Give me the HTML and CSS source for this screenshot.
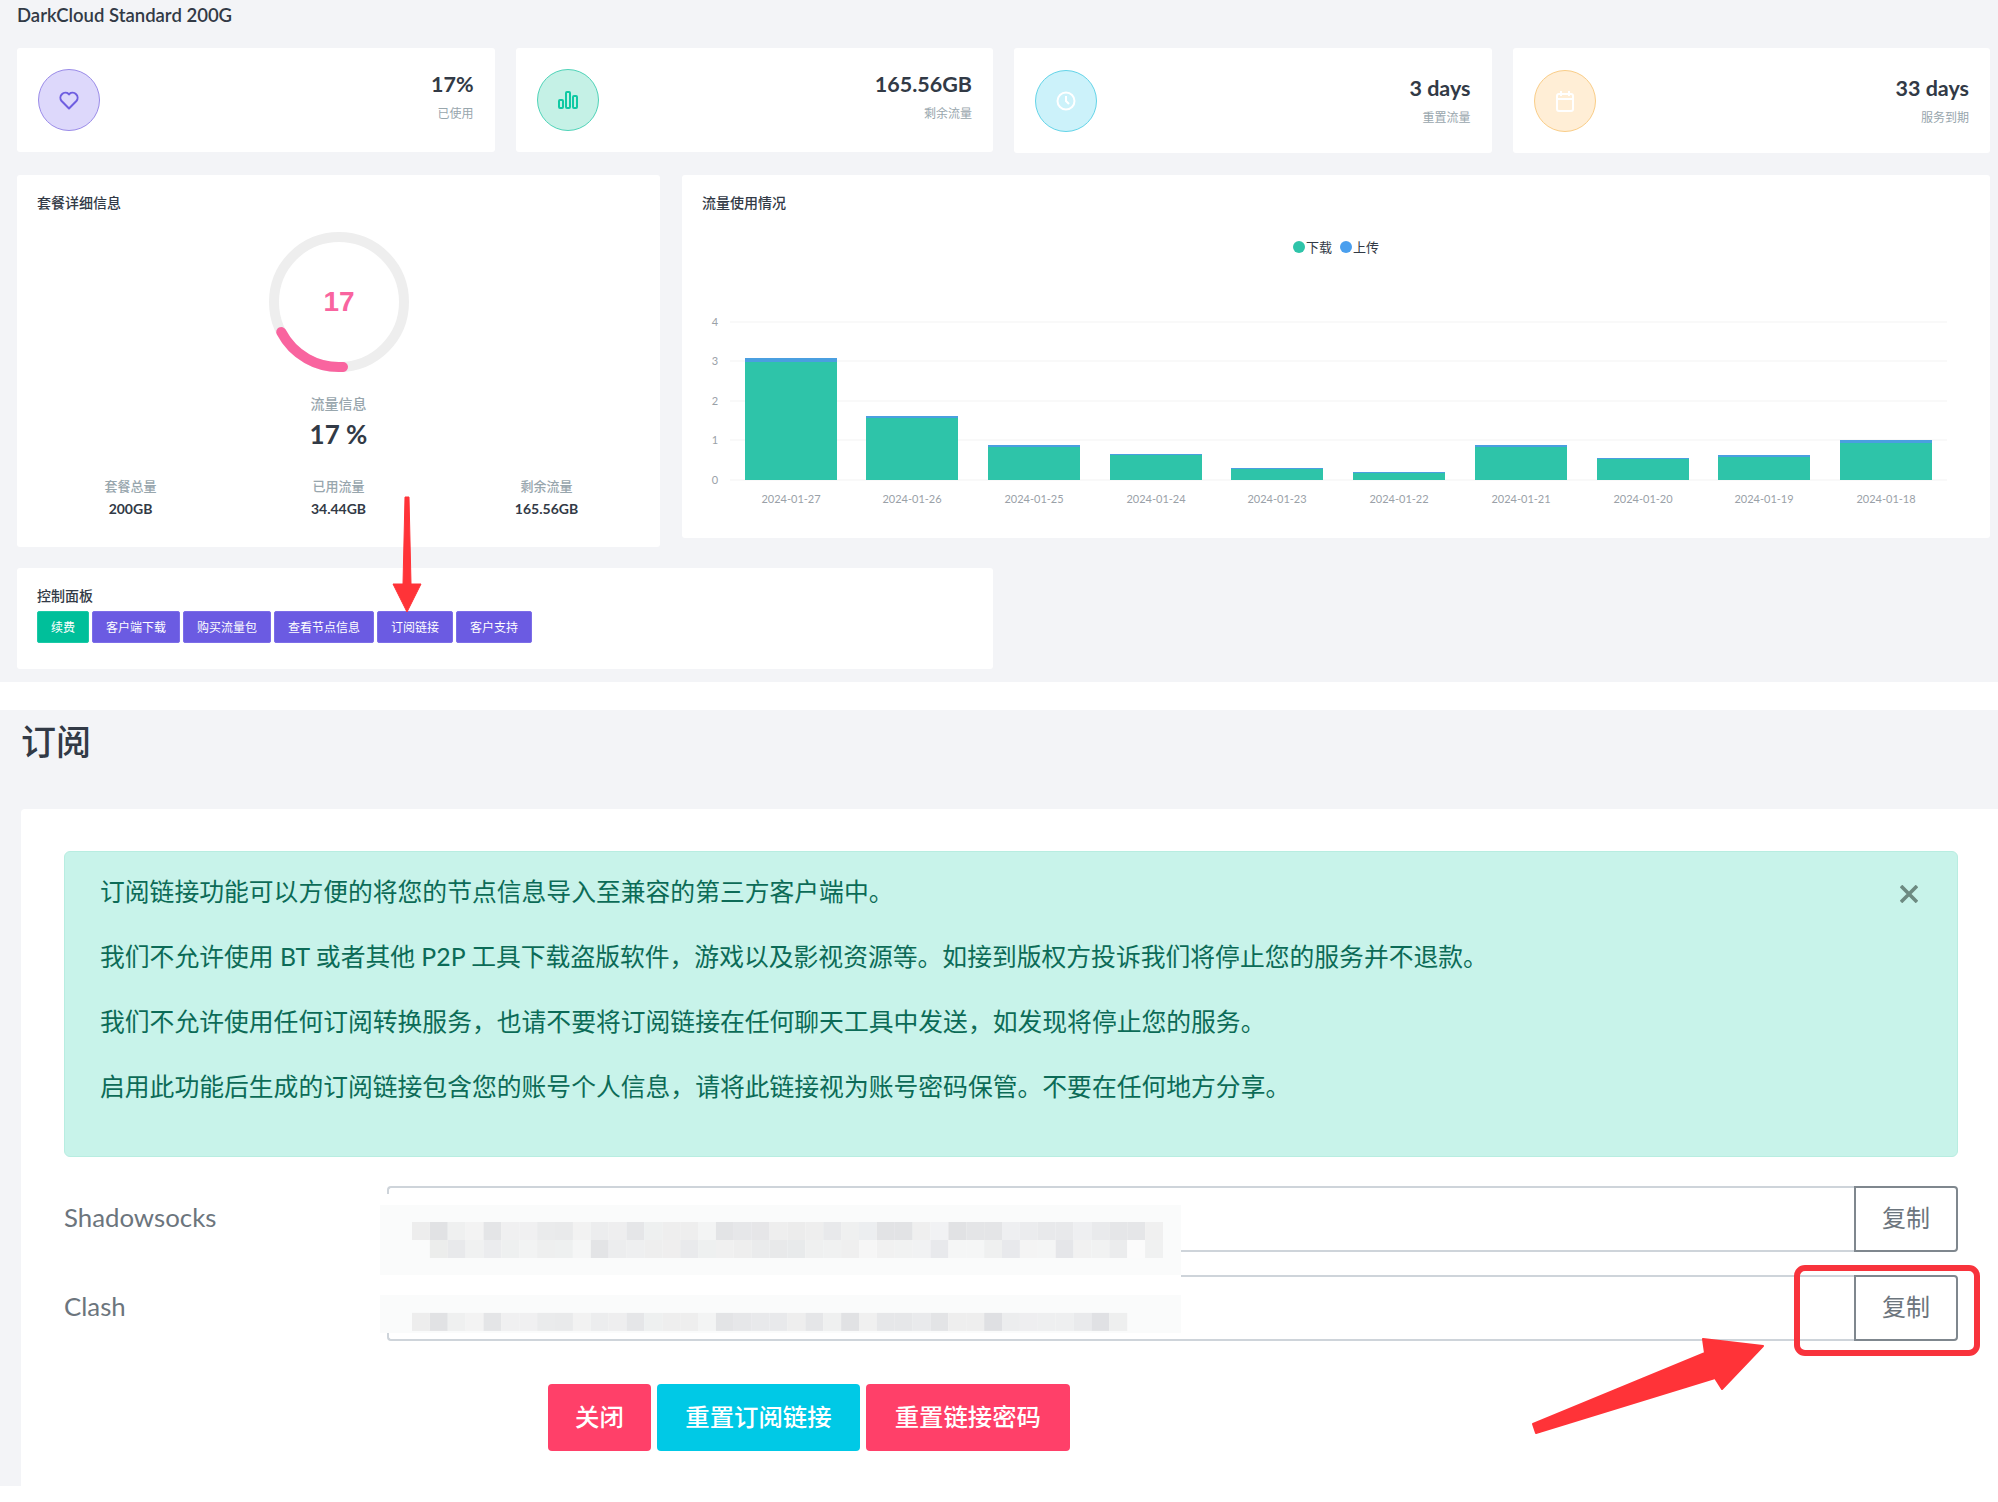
FILE: index.html
```html
<!DOCTYPE html>
<html lang="zh">
<head>
<meta charset="utf-8">
<title>DarkCloud Standard 200G</title>
<link rel="stylesheet" href="styles.css">
</head>
<body>

<section class="dash">
    <h5 class="plan-name">DarkCloud Standard 200G</h5>

    <div class="stat-row">
        <div class="stat-card">
            <span class="stat-icon purple">
                <svg width="24" height="24" viewBox="0 0 24 24" fill="none" stroke="#6f5ee0" stroke-width="2" stroke-linejoin="round"><path d="M12 20.5 4.6 13A5 5 0 0 1 11.7 6l.3.4.3-.4a5 5 0 0 1 7.1 7z"/></svg>
            </span>
            <div class="stat-text">
                <div class="stat-value">17%</div>
                <div class="stat-label">已使用</div>
            </div>
        </div>
        <div class="stat-card">
            <span class="stat-icon green">
                <svg width="24" height="24" viewBox="0 0 24 24" fill="none" stroke="#10c9a3" stroke-width="2"><rect x="3" y="12" width="4" height="8" rx="1"/><rect x="10" y="4" width="4" height="16" rx="1"/><rect x="17" y="8" width="4" height="12" rx="1"/></svg>
            </span>
            <div class="stat-text">
                <div class="stat-value">165.56GB</div>
                <div class="stat-label">剩余流量</div>
            </div>
        </div>
        <div class="stat-card tall">
            <span class="stat-icon blue">
                <svg width="24" height="24" viewBox="0 0 24 24" fill="none" stroke="#fff" stroke-width="2"><circle cx="12" cy="12" r="8.5"/><path d="M12 7v5l3 3"/></svg>
            </span>
            <div class="stat-text">
                <div class="stat-value">3 days</div>
                <div class="stat-label">重置流量</div>
            </div>
        </div>
        <div class="stat-card tall">
            <span class="stat-icon orange">
                <svg width="24" height="24" viewBox="0 0 24 24" fill="none" stroke="#fff" stroke-width="2"><rect x="4" y="5" width="16" height="17" rx="2"/><path d="M4 10h16M8 2v5M16 2v5"/></svg>
            </span>
            <div class="stat-text">
                <div class="stat-value">33 days</div>
                <div class="stat-label">服务到期</div>
            </div>
        </div>
    </div>

    <div class="info-row">
        <div class="card plan-card">
            <h6 class="card-title">套餐详细信息</h6>
            <svg class="ring" width="150" height="150" viewBox="0 0 150 150" fill="none">
                <circle cx="75" cy="75" r="65" stroke="#eeeeee" stroke-width="10"/>
                <path d="M79 139.9A65 65 0 0 1 17.2 104.9" stroke="#f9649f" stroke-width="10" stroke-linecap="round"/>
                <text class="ring-number" x="75" y="84" text-anchor="middle">17</text>
            </svg>
            <div class="usage-label">流量信息</div>
            <div class="usage-value">17 %</div>
            <div class="usage-grid">
                <div><div class="usage-key">套餐总量</div><div class="usage-num">200GB</div></div>
                <div><div class="usage-key">已用流量</div><div class="usage-num">34.44GB</div></div>
                <div><div class="usage-key">剩余流量</div><div class="usage-num">165.56GB</div></div>
            </div>
        </div>

        <div class="card chart-card">
            <h6 class="card-title">流量使用情况</h6>
            <svg class="chart" width="1308" height="313" viewBox="0 0 1308 313">
                <circle cx="617" cy="22" r="6" fill="#2ec4a9"/>
                <text class="legend" x="624" y="27">下载</text>
                <circle cx="664" cy="22" r="6" fill="#4a9fee"/>
                <text class="legend" x="671" y="27">上传</text>

                <g stroke="#f7f8f8" stroke-width="1.5">
                    <path d="M48 97H1265M48 136H1265M48 176H1265M48 215H1265M48 255H1265"/>
                </g>
                <g class="axis" text-anchor="middle">
                    <text x="33" y="101">4</text>
                    <text x="33" y="140">3</text>
                    <text x="33" y="180">2</text>
                    <text x="33" y="219">1</text>
                    <text x="33" y="259">0</text>
                    <text x="109" y="278">2024-01-27</text>
                    <text x="230" y="278">2024-01-26</text>
                    <text x="352" y="278">2024-01-25</text>
                    <text x="474" y="278">2024-01-24</text>
                    <text x="595" y="278">2024-01-23</text>
                    <text x="717" y="278">2024-01-22</text>
                    <text x="839" y="278">2024-01-21</text>
                    <text x="961" y="278">2024-01-20</text>
                    <text x="1082" y="278">2024-01-19</text>
                    <text x="1204" y="278">2024-01-18</text>
                </g>
                <g fill="#2ec4a9">
                    <rect x="63" y="137" width="92" height="118"/>
                    <rect x="184" y="193" width="92" height="62"/>
                    <rect x="306" y="222" width="92" height="33"/>
                    <rect x="428" y="230" width="92" height="25"/>
                    <rect x="549" y="244" width="92" height="11"/>
                    <rect x="671" y="248" width="92" height="7"/>
                    <rect x="793" y="222" width="92" height="33"/>
                    <rect x="915" y="234" width="92" height="21"/>
                    <rect x="1036" y="232" width="92" height="23"/>
                    <rect x="1158" y="218" width="92" height="37"/>
                </g>
                <g fill="#4a9fe0">
                    <rect x="63" y="133" width="92" height="4"/>
                    <rect x="184" y="191" width="92" height="2"/>
                    <rect x="306" y="220" width="92" height="2"/>
                    <rect x="428" y="229" width="92" height="1"/>
                    <rect x="549" y="243" width="92" height="1"/>
                    <rect x="671" y="247" width="92" height="1"/>
                    <rect x="793" y="220" width="92" height="2"/>
                    <rect x="915" y="233" width="92" height="1"/>
                    <rect x="1036" y="230" width="92" height="2"/>
                    <rect x="1158" y="215" width="92" height="3"/>
                </g>
            </svg>
        </div>
    </div>

    <div class="card control-card">
        <h6 class="control-title">控制面板</h6>
        <div class="control-btns">
            <button class="btn-small renew">续费</button>
            <button class="btn-small">客户端下载</button>
            <button class="btn-small">购买流量包</button>
            <button class="btn-small">查看节点信息</button>
            <button class="btn-small">订阅链接</button>
            <button class="btn-small">客户支持</button>
        </div>
    </div>
</section>

<section class="subscribe">
    <h2 class="subscribe-title">订阅</h2>
    <div class="subscribe-card">
        <div class="alert">
            <svg class="alert-close" width="18" height="18" viewBox="0 0 18 18" stroke="#6d8a81" stroke-width="3.6"><path d="M1 1 17 17M17 1 1 17"/></svg>
            <p>订阅链接功能可以方便的将您的节点信息导入至兼容的第三方客户端中。</p>
            <p>我们不允许使用 BT 或者其他 P2P 工具下载盗版软件，游戏以及影视资源等。如接到版权方投诉我们将停止您的服务并不退款。</p>
            <p>我们不允许使用任何订阅转换服务，也请不要将订阅链接在任何聊天工具中发送，如发现将停止您的服务。</p>
            <p>启用此功能后生成的订阅链接包含您的账号个人信息，请将此链接视为账号密码保管。不要在任何地方分享。</p>
        </div>

        <div class="key-form">
            <div class="key-row">
                <label class="key-label">Shadowsocks</label>
                <input class="key-input" type="text">
                <button class="copy-btn">复制</button>
            </div>
            <div class="key-row">
                <label class="key-label">Clash</label>
                <input class="key-input" type="text">
                <button class="copy-btn">复制</button>
            </div>

            <!-- blurred out links -->
            <svg class="mosaic" width="801" height="139" viewBox="0 0 801 139">
                <rect width="801" height="139" fill="#fff"/>
                <rect y="11" width="801" height="70" fill="#fafbfb"/>
                <rect y="101" width="801" height="38" fill="#fafbfb"/>
                <g transform="translate(32 28) scale(17.88 18)">
                    <rect x="0" width="1" height="1" fill="#ededed"/><rect x="1" width="1" height="1" fill="#e1e2e4"/><rect x="2" width="1" height="1" fill="#eff0f0"/><rect x="3" width="1" height="1" fill="#f3f3f3"/><rect x="4" width="1" height="1" fill="#e4e5e7"/><rect x="5" width="1" height="1" fill="#f0f0f1"/><rect x="6" width="1" height="1" fill="#f0f0f1"/>
                    <rect x="7" width="1" height="1" fill="#eaebec"/><rect x="8" width="1" height="1" fill="#e9eaeb"/><rect x="9" width="1" height="1" fill="#f2f2f2"/><rect x="10" width="1" height="1" fill="#ecedee"/><rect x="11" width="1" height="1" fill="#eeeeef"/><rect x="12" width="1" height="1" fill="#e5e6e8"/><rect x="13" width="1" height="1" fill="#eef0f0"/>
                    <rect x="14" width="1" height="1" fill="#eeeeee"/><rect x="15" width="1" height="1" fill="#eeeeee"/><rect x="16" width="1" height="1" fill="#f3f4f4"/><rect x="17" width="1" height="1" fill="#e3e4e6"/><rect x="18" width="1" height="1" fill="#e6e7e9"/><rect x="19" width="1" height="1" fill="#e6e6e8"/><rect x="20" width="1" height="1" fill="#eeeeee"/>
                    <rect x="21" width="1" height="1" fill="#ececec"/><rect x="22" width="1" height="1" fill="#eeeeee"/><rect x="23" width="1" height="1" fill="#e8e9eb"/><rect x="24" width="1" height="1" fill="#eff0f0"/><rect x="25" width="1" height="1" fill="#eceef0"/><rect x="26" width="1" height="1" fill="#e2e3e5"/><rect x="27" width="1" height="1" fill="#e2e3e5"/>
                    <rect x="28" width="1" height="1" fill="#efefef"/><rect x="29" width="1" height="1" fill="#f1f2f4"/><rect x="30" width="1" height="1" fill="#e1e2e4"/><rect x="31" width="1" height="1" fill="#e4e5e7"/><rect x="32" width="1" height="1" fill="#e4e5e7"/><rect x="33" width="1" height="1" fill="#eeeff1"/><rect x="34" width="1" height="1" fill="#ebecee"/>
                    <rect x="35" width="1" height="1" fill="#e8e9eb"/><rect x="36" width="1" height="1" fill="#e8e9eb"/><rect x="37" width="1" height="1" fill="#eeeff1"/><rect x="38" width="1" height="1" fill="#e9eaec"/><rect x="39" width="1" height="1" fill="#e5e6e8"/><rect x="40" width="1" height="1" fill="#e5e6e8"/><rect x="41" width="1" height="1" fill="#f0f0f0"/>

                    <rect x="1" y="1" width="1" height="1" fill="#ecedec"/><rect x="2" y="1" width="1" height="1" fill="#e8e9eb"/><rect x="3" y="1" width="1" height="1" fill="#f0f1f1"/><rect x="4" y="1" width="1" height="1" fill="#ebecee"/><rect x="5" y="1" width="1" height="1" fill="#eef0f0"/><rect x="6" y="1" width="1" height="1" fill="#f2f3f3"/><rect x="7" y="1" width="1" height="1" fill="#eeefef"/>
                    <rect x="8" y="1" width="1" height="1" fill="#eef0f0"/><rect x="9" y="1" width="1" height="1" fill="#f5f6f6"/><rect x="10" y="1" width="1" height="1" fill="#e3e4e6"/><rect x="11" y="1" width="1" height="1" fill="#ecedee"/><rect x="12" y="1" width="1" height="1" fill="#eeeff0"/><rect x="13" y="1" width="1" height="1" fill="#eeeeee"/><rect x="14" y="1" width="1" height="1" fill="#efeeee"/>
                    <rect x="15" y="1" width="1" height="1" fill="#e9eaec"/><rect x="16" y="1" width="1" height="1" fill="#eef0f0"/><rect x="17" y="1" width="1" height="1" fill="#f0f0f0"/><rect x="18" y="1" width="1" height="1" fill="#eeeeee"/><rect x="19" y="1" width="1" height="1" fill="#eaebec"/><rect x="20" y="1" width="1" height="1" fill="#e8e9ea"/><rect x="21" y="1" width="1" height="1" fill="#e8eaeb"/>
                    <rect x="22" y="1" width="1" height="1" fill="#eff0f0"/><rect x="23" y="1" width="1" height="1" fill="#f0f1f1"/><rect x="24" y="1" width="1" height="1" fill="#efefef"/><rect x="25" y="1" width="1" height="1" fill="#f6f6f6"/><rect x="26" y="1" width="1" height="1" fill="#f1f1f1"/><rect x="27" y="1" width="1" height="1" fill="#f1f2f2"/><rect x="28" y="1" width="1" height="1" fill="#f1f2f3"/>
                    <rect x="29" y="1" width="1" height="1" fill="#e8e9ec"/><rect x="30" y="1" width="1" height="1" fill="#f5f6f6"/><rect x="31" y="1" width="1" height="1" fill="#f5f6f6"/><rect x="32" y="1" width="1" height="1" fill="#eff0f0"/><rect x="33" y="1" width="1" height="1" fill="#e8e9ec"/><rect x="34" y="1" width="1" height="1" fill="#f4f4f4"/><rect x="35" y="1" width="1" height="1" fill="#f4f5f5"/>
                    <rect x="36" y="1" width="1" height="1" fill="#e5e6e9"/><rect x="37" y="1" width="1" height="1" fill="#f1f1f1"/><rect x="38" y="1" width="1" height="1" fill="#f1f2f2"/><rect x="39" y="1" width="1" height="1" fill="#ebeced"/><rect x="40" y="1" width="1" height="1" fill="#fbfbfb"/><rect x="41" y="1" width="1" height="1" fill="#f0f1f1"/>

                    <rect x="0" y="5.05" width="1" height="1" fill="#ededed"/><rect x="1" y="5.05" width="1" height="1" fill="#e1e2e4"/><rect x="2" y="5.05" width="1" height="1" fill="#eff0f0"/><rect x="3" y="5.05" width="1" height="1" fill="#f3f3f3"/><rect x="4" y="5.05" width="1" height="1" fill="#e4e5e7"/><rect x="5" y="5.05" width="1" height="1" fill="#f0f0f1"/><rect x="6" y="5.05" width="1" height="1" fill="#f0f0f1"/>
                    <rect x="7" y="5.05" width="1" height="1" fill="#eaebec"/><rect x="8" y="5.05" width="1" height="1" fill="#e9eaeb"/><rect x="9" y="5.05" width="1" height="1" fill="#f2f2f2"/><rect x="10" y="5.05" width="1" height="1" fill="#ecedee"/><rect x="11" y="5.05" width="1" height="1" fill="#eeeeef"/><rect x="12" y="5.05" width="1" height="1" fill="#e5e6e8"/><rect x="13" y="5.05" width="1" height="1" fill="#eef0f0"/>
                    <rect x="14" y="5.05" width="1" height="1" fill="#eeeeee"/><rect x="15" y="5.05" width="1" height="1" fill="#eeeeee"/><rect x="16" y="5.05" width="1" height="1" fill="#f3f4f4"/><rect x="17" y="5.05" width="1" height="1" fill="#e3e4e6"/><rect x="18" y="5.05" width="1" height="1" fill="#e6e7e9"/><rect x="19" y="5.05" width="1" height="1" fill="#e8e9eb"/><rect x="20" y="5.05" width="1" height="1" fill="#e8e9eb"/>
                    <rect x="21" y="5.05" width="1" height="1" fill="#eeeeee"/><rect x="22" y="5.05" width="1" height="1" fill="#e5e6e8"/><rect x="23" y="5.05" width="1" height="1" fill="#eff0f0"/><rect x="24" y="5.05" width="1" height="1" fill="#e1e2e4"/><rect x="25" y="5.05" width="1" height="1" fill="#f0f0f0"/><rect x="26" y="5.05" width="1" height="1" fill="#e6e7e9"/><rect x="27" y="5.05" width="1" height="1" fill="#e6e7e9"/>
                    <rect x="28" y="5.05" width="1" height="1" fill="#e9eaec"/><rect x="29" y="5.05" width="1" height="1" fill="#e3e4e6"/><rect x="30" y="5.05" width="1" height="1" fill="#eeeeee"/><rect x="31" y="5.05" width="1" height="1" fill="#eeeeee"/><rect x="32" y="5.05" width="1" height="1" fill="#dfe0e3"/><rect x="33" y="5.05" width="1" height="1" fill="#ecedee"/><rect x="34" y="5.05" width="1" height="1" fill="#eeeef0"/>
                    <rect x="35" y="5.05" width="1" height="1" fill="#eeeff0"/><rect x="36" y="5.05" width="1" height="1" fill="#eeeff0"/><rect x="37" y="5.05" width="1" height="1" fill="#e9eaec"/><rect x="38" y="5.05" width="1" height="1" fill="#e0e1e4"/><rect x="39" y="5.05" width="1" height="1" fill="#eeefef"/>
                </g>
            </svg>
        </div>

        <div class="actions">
            <button class="btn-big red close">关闭</button>
            <button class="btn-big cyan">重置订阅链接</button>
            <button class="btn-big red">重置链接密码</button>
        </div>
    </div>
</section>

<!-- red marks drawn on top of the screenshot -->
<svg class="marks" width="1998" height="1502" viewBox="0 0 1998 1502">
    <path d="M405 497H409L411 584H421L407 612L393 584H403Z" fill="#ff3338" stroke="#ff3338" stroke-linejoin="round"/>
    <rect x="1797" y="1268" width="180" height="85" rx="8" fill="none" stroke="#f8333c" stroke-width="6"/>
    <path d="M1533 1424 1705 1353 1703 1339 1763 1346 1722 1389 1715 1378 1536 1433Z" fill="#ff3338" stroke="#ff3338" stroke-width="2" stroke-linejoin="round"/>
</svg>

</body>
</html>
```

FILE: styles.css
```css
html, body {
    margin: 0;
    padding: 0;
}

body {
    position: relative;
    width: 1998px;
    height: 1502px;
    overflow: hidden;
    background: #fff;
    color: #323a46;
    font-family: "Lato", "Noto Sans CJK SC", sans-serif;
}

button {
    font-family: inherit;
    cursor: pointer;
}

/* top dashboard */
.dash {
    height: 682px;
    box-sizing: border-box;
    padding: 0 8px 0 17px;
    background: #f3f4f7;
}

.plan-name {
    margin: 0;
    height: 48px;
    padding-top: 4px;
    box-sizing: border-box;
    font-size: 18.5px;
    line-height: 22px;
    font-weight: 600;
}

.stat-row {
    display: grid;
    grid-template-columns: repeat(4, 1fr);
    gap: 21px;
    align-items: start;
}

.stat-card {
    display: flex;
    align-items: center;
    justify-content: space-between;
    height: 104px;
    box-sizing: border-box;
    padding: 0 21px;
    background: #fff;
    border-radius: 3px;
}

.stat-card.tall {
    height: 105px;
}

.stat-icon {
    display: flex;
    align-items: center;
    justify-content: center;
    width: 62px;
    height: 62px;
    box-sizing: border-box;
    border: 1.5px solid;
    border-radius: 50%;
}

.stat-icon.purple { background: #ddd8fb; border-color: #9a8be8; }
.stat-icon.green { background: #c5f1e6; border-color: #4fd3b8; }
.stat-icon.blue { background: #ccf2fa; border-color: #63d4e8; }
.stat-icon.orange { background: #ffeed6; border-color: #f9cd88; }

.stat-text {
    text-align: right;
}

.stat-value {
    font-size: 21.5px;
    line-height: 30px;
    font-weight: 700;
}

.stat-label {
    margin-top: 7px;
    font-size: 12px;
    line-height: 16px;
    color: #98a6ad;
}

.stat-card .stat-text {
    margin-top: -9px;
}

.stat-card.tall .stat-text {
    margin-top: -3px;
}

.info-row {
    display: flex;
    align-items: flex-start;
    gap: 22px;
    margin-top: 22px;
}

.card {
    background: #fff;
    border-radius: 3px;
}

.card-title {
    margin: 0;
    padding: 19px 0 0 20px;
    font-size: 14px;
    line-height: 18px;
    font-weight: 500;
}

.plan-card {
    width: 643px;
    height: 372px;
    text-align: center;
}

.plan-card .card-title {
    text-align: left;
}

.ring {
    display: block;
    margin: 15px auto 0;
}

.ring-number {
    fill: #f9649f;
    font-family: "Liberation Sans", sans-serif;
    font-size: 28px;
    font-weight: 700;
}

.usage-label {
    margin-top: 17px;
    font-size: 14px;
    line-height: 20px;
    color: #98a6ad;
    font-weight: 500;
}

.usage-value {
    margin-top: 2px;
    font-size: 26px;
    line-height: 36px;
    font-weight: 700;
}

.usage-grid {
    display: grid;
    grid-template-columns: repeat(3, 208px);
    justify-content: center;
    margin-top: 25px;
}

.usage-key {
    font-size: 13px;
    line-height: 18px;
    color: #98a6ad;
    font-weight: 500;
}

.usage-num {
    margin-top: 5px;
    font-size: 14px;
    line-height: 18px;
    font-weight: 700;
}

.chart-card {
    width: 1308px;
    height: 363px;
}

.chart {
    display: block;
    margin-top: 13px;
}

.legend {
    font-size: 13px;
    fill: #323a46;
}

.axis text {
    font-size: 11px;
    fill: #9aa1a8;
}

.control-card {
    width: 976px;
    height: 101px;
    box-sizing: border-box;
    margin-top: 21px;
    padding: 20px 20px 0;
}

.control-title {
    margin: 0;
    font-size: 14px;
    line-height: 16px;
    font-weight: 500;
}

.control-btns {
    display: flex;
    gap: 3px;
    margin-top: 7px;
}

.btn-small {
    height: 32px;
    padding: 0 13px 2px;
    border: 1px solid #7c6de8;
    border-radius: 2px;
    background: #6b5be2;
    color: #fff;
    font-size: 12px;
}

.btn-small.renew {
    background: #00bf9a;
    border-color: #1bc9a6;
}

/* subscribe section */
.subscribe {
    height: 776px;
    box-sizing: border-box;
    margin-top: 28px;
    padding-left: 21px;
    background: #f3f4f7;
}

.subscribe-title {
    margin: 0;
    height: 99px;
    box-sizing: border-box;
    padding-top: 7px;
    font-size: 35px;
    line-height: 48px;
    font-weight: 500;
}

.subscribe-card {
    height: 677px;
    box-sizing: border-box;
    padding: 42px 40px 0 43px;
    background: #fff;
    border-top-left-radius: 4px;
}

.alert {
    position: relative;
    padding: 22px 35px;
    border: 1px solid #b8ede1;
    border-radius: 6px;
    background: #c8f3ea;
    color: #0c6b57;
    font-size: 24.8px;
    line-height: 36px;
}

.alert p {
    margin: 0 0 29px;
}

.alert-close {
    position: absolute;
    top: 33px;
    right: 39px;
}

.key-form {
    position: relative;
    margin-top: 29px;
}

.key-row {
    display: flex;
    height: 66px;
    margin-bottom: 23px;
}

.key-label {
    width: 323px;
    font-size: 25.8px;
    line-height: 62px;
    color: #6c757d;
}

.key-input {
    flex: 1;
    min-width: 0;
    box-sizing: border-box;
    border: 2px solid #ced4da;
    border-right: 0;
    border-radius: 4px 0 0 4px;
    background: #fff;
}

.copy-btn {
    width: 104px;
    padding: 0 0 6px;
    border: 2px solid #7f878e;
    border-radius: 0 4px 4px 0;
    background: #fff;
    color: #6c757d;
    font-size: 24px;
}

.mosaic {
    position: absolute;
    left: 316px;
    top: 8px;
}

.actions {
    display: flex;
    gap: 6px;
    margin: 43px 0 0 484px;
}

.btn-big {
    height: 67px;
    padding: 0 28.5px 4px;
    border: 0;
    border-radius: 4px;
    color: #fff;
    font-size: 24.4px;
    font-weight: 500;
}

.btn-big.close { padding: 0 27px 4px; }
.btn-big.red { background: #ff4069; }
.btn-big.cyan { background: #00c9e6; }

.marks {
    position: absolute;
    left: 0;
    top: 0;
    pointer-events: none;
}
```
